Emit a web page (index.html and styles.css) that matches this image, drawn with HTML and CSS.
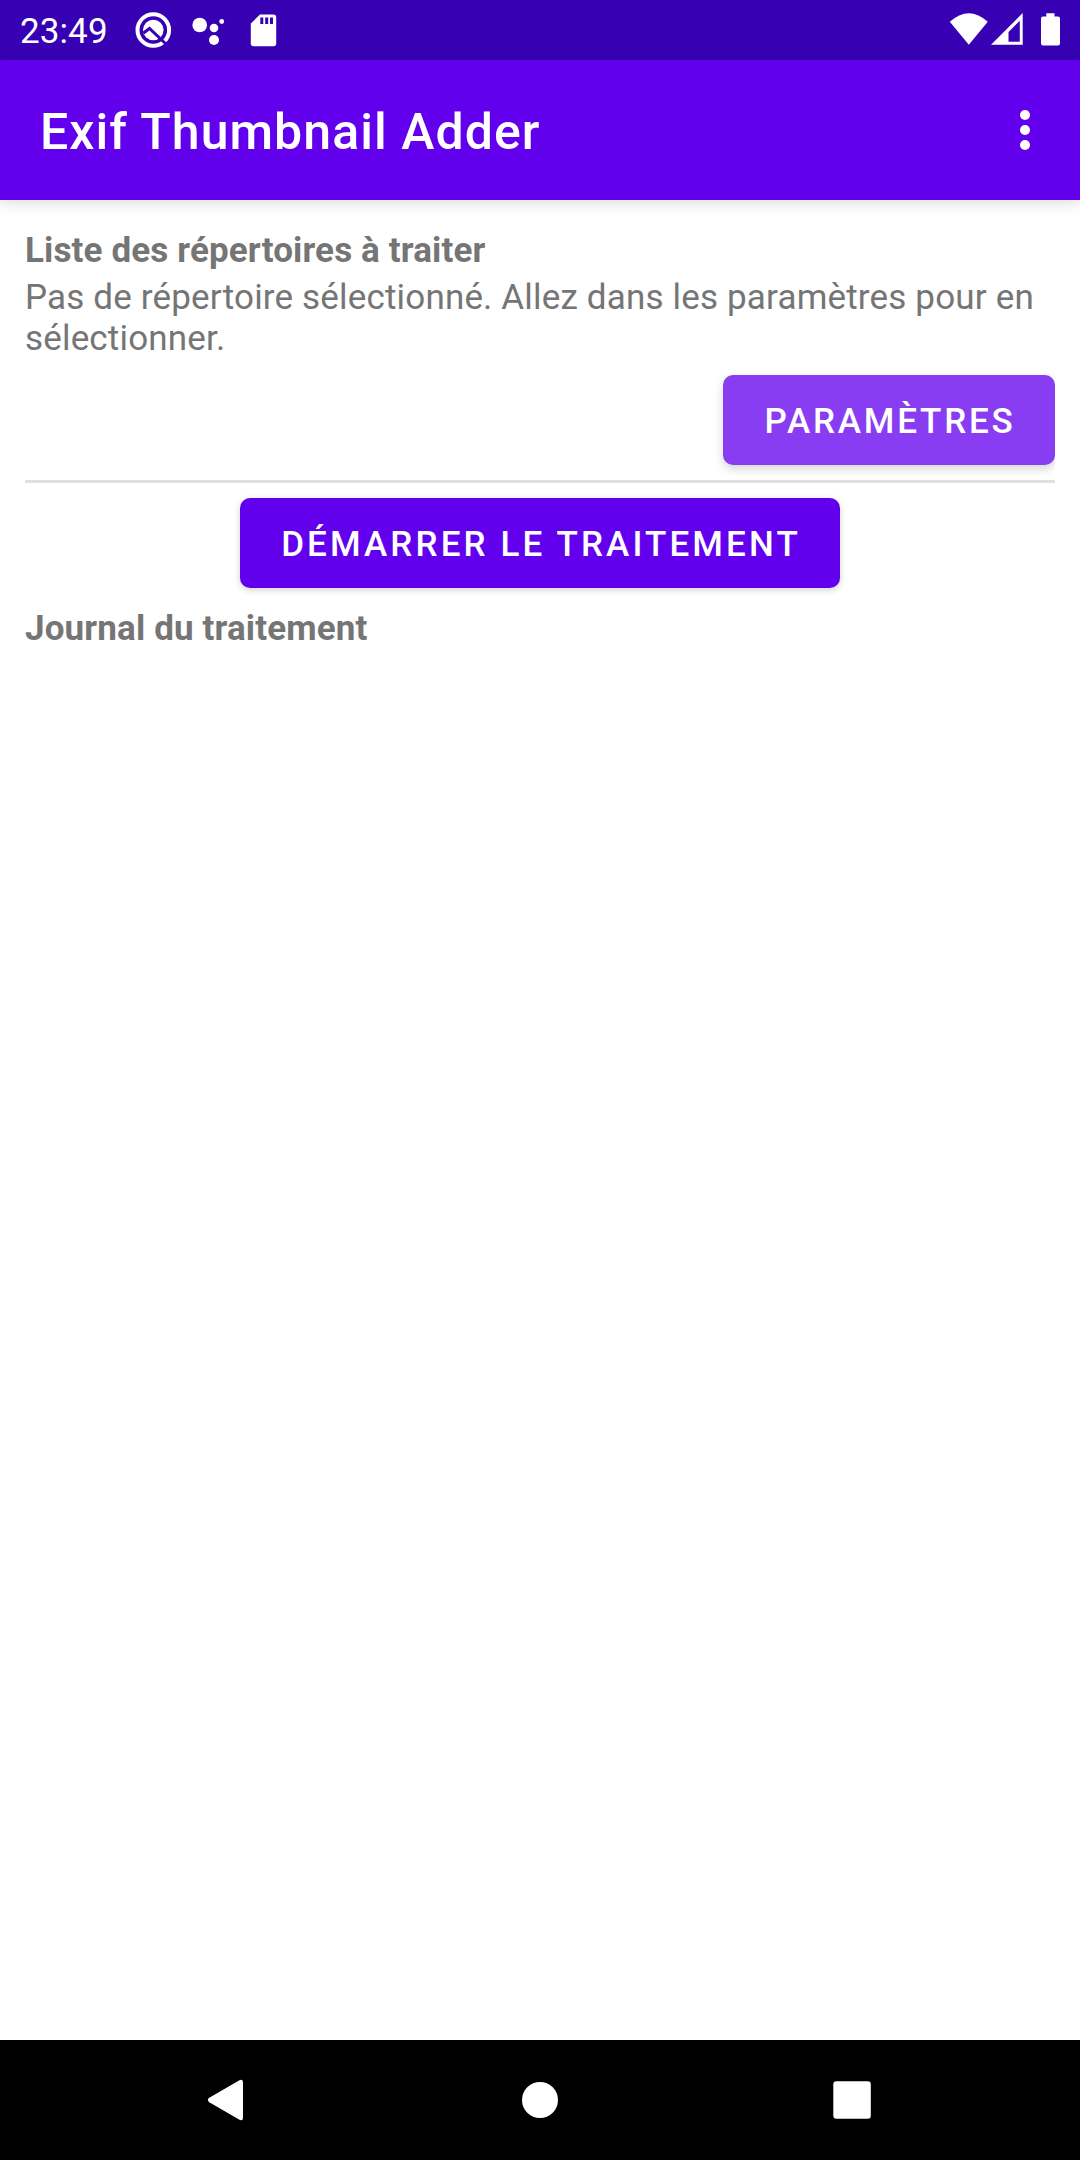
FILE: index.html
```html
<!DOCTYPE html>
<html lang="fr">
<head>
<meta charset="utf-8">
<title>Exif Thumbnail Adder</title>
<link rel="stylesheet" href="styles.css">
</head>
<body>
<div class="screen">
  <header class="status">
    <span class="clock">23:49</span>
    <svg class="status-left" width="150" height="60" viewBox="130 0 150 60">
      <circle cx="153.3" cy="30" r="15.800" fill="none" stroke="#fff" stroke-width="4"/>
      <circle cx="153.3" cy="30" r="10.300" fill="#fff"/>
      <path d="M143.500 33 149.500 28.500 167 45" fill="none" stroke="#3700b3" stroke-width="3"/>
      <g fill="#fff"><circle cx="199.700" cy="25" r="7.300"/><circle cx="214" cy="28" r="4.300"/><circle cx="221.700" cy="21.500" r="2.400"/><circle cx="214" cy="40" r="5"/></g>
      <path fill="#fff" fill-rule="evenodd" d="M260 14.500h13.500a2.700 2.700 0 0 1 2.700 2.700v26.300a2.700 2.700 0 0 1-2.700 2.700h-20a2.700 2.700 0 0 1-2.700-2.700v-20zM260.300 17.500v6.500h3v-6.500zM265.200 17.500v6.500h3v-6.500zM270 17.500v6.500h3v-6.500z"/>
    </svg>
    <svg class="status-right" width="130" height="60" viewBox="940 0 130 60">
      <g fill="#fff">
        <path d="M949.800 21.700Q968.800 4.600 987.800 21.700L968.800 44.800z"/>
        <path fill-rule="evenodd" d="M991 44.800 1022.700 13v31.800zM1019.800 20.800 1008.500 32v9.800h11.300z"/>
        <path d="M1046.300 13.300h8.200v3.200h3.500a2 2 0 0 1 2 2v25a2 2 0 0 1-2 2h-15a2 2 0 0 1-2-2v-25a2 2 0 0 1 2-2h3.300z"/>
      </g>
    </svg>
  </header>
  <div class="toolbar">
    <h1 class="title">Exif Thumbnail Adder</h1>
    <svg class="more" width="10" height="40" viewBox="0 0 10 40" fill="#fff"><circle cx="5" cy="5" r="5"/><circle cx="5" cy="20" r="5"/><circle cx="5" cy="35" r="5"/></svg>
  </div>
  <main class="content">
    <h2 class="heading">Liste des répertoires à traiter</h2>
    <p class="message">Pas de répertoire sélectionné. Allez dans les paramètres pour en sélectionner.</p>
    <div class="settings-row"><button class="button settings">PARAMÈTRES</button></div>
    <hr class="divider">
    <button class="button start">DÉMARRER LE TRAITEMENT</button>
    <h2 class="heading">Journal du traitement</h2>
  </main>
  <nav class="navbar">
    <svg width="1080" height="120" viewBox="0 0 1080 120" fill="#fff">
      <path d="M209.300 57.800 239 40.400q4-2 4 2v35.200q0 4-4 2L209.300 62.200q-3-2.200 0-4.400z"/>
      <circle cx="540" cy="60" r="18"/>
      <rect x="833.300" y="41.200" width="37.500" height="37.500" rx="3"/>
    </svg>
  </nav>
</div>
</body>
</html>
```
FILE: styles.css
```css
* { box-sizing: border-box; }
body { margin: 0; background: #fff; font-family: Roboto, sans-serif; }
h1, h2, p { margin: 0; }
svg { display: block; }
.screen { width: 1080px; height: 2160px; display: flex; flex-direction: column; overflow: hidden; }
.status { height: 60px; flex: none; display: flex; align-items: center; padding-left: 20px; padding-right: 10px; background: #3700b3; color: #fff; }
.clock { width: 110px; font-size: 35px; line-height: 41px; padding-top: 2px; letter-spacing: .1px; }
.status-right { margin-left: auto; }
.toolbar { height: 140px; flex: none; display: flex; align-items: center; justify-content: space-between; padding: 0 50px 0 40px; background: #6200ee; color: #fff; box-shadow: 0 3px 14px rgba(0, 0, 0, .14); }
.title { font-size: 50px; line-height: 58px; font-weight: 500; letter-spacing: 1.05px; padding-top: 3px; }
.content { flex: 1; display: flex; flex-direction: column; padding: 30px 25px 0; color: #757575; }
.heading { font-size: 35px; line-height: 41px; font-weight: 700; letter-spacing: .14px; }
.message { margin-top: 6px; font-size: 35px; line-height: 41px; letter-spacing: .17px; }
.settings-row { height: 106px; display: flex; justify-content: flex-end; padding-top: 16px; overflow-x: clip; }
.button { height: 90px; padding: 2px 0 0; border: 0; border-radius: 10px; color: #fff; font: 500 35px/41px Roboto, sans-serif; letter-spacing: 3.125px; text-indent: 2px; white-space: nowrap; box-shadow: 0 2px 7px rgba(0, 0, 0, .18); }
.settings { width: 332px; background: #883df2; letter-spacing: 2.8px; box-shadow: 0 4px 10px rgba(0, 0, 0, .17); }
.divider { width: 100%; height: 3px; flex: none; margin: 15px 0; border: 0; background: #e0e0e0; }
.start { width: 600px; align-self: center; background: #6200ee; margin-bottom: 20px; }
.navbar { height: 120px; flex: none; background: #000; }
```
